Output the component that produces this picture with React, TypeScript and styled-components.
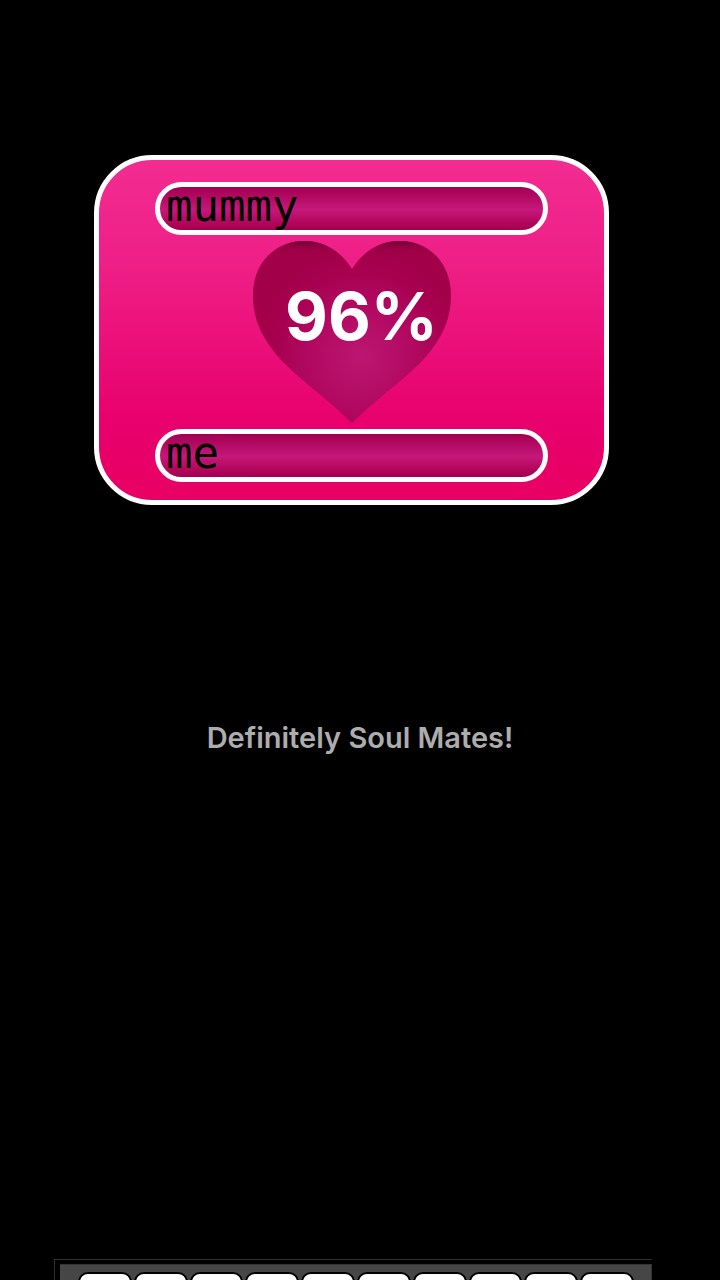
import React, { useState } from "react";
import styled, { createGlobalStyle } from "styled-components";

const GlobalStyle = createGlobalStyle`
  * { box-sizing: border-box; }
  body { margin: 0; background: #000; }
`;

const Page = styled.main`
  display: flex;
  flex-direction: column;
  min-height: 100vh;
  padding-top: 155px;
  background: #000;
  font-family: Inter, "Liberation Sans", sans-serif;
`;

const Card = styled.form`
  display: flex;
  flex-direction: column;
  align-items: center;
  margin: 0 111px 0 94px;
  padding: 22px 56px 18px;
  border: 5px solid #fff;
  border-radius: 58px;
  background: linear-gradient(#f22c92 0%, #ee1f86 30%, #e8006c 78%, #e80064 100%);
`;

const NameField = styled.input`
  display: block;
  width: 100%;
  height: 53px;
  padding: 0 0 6px 6px;
  border: 5px solid #fff;
  border-radius: 27px;
  outline: none;
  background: linear-gradient(#a3004f 0%, #b00860 20%, #c5187a 52%, #b4085e 80%, #a3004f 100%);
  color: #000;
  font: 44px "DejaVu Sans Mono", monospace;
`;

const Meter = styled.div`
  position: relative;
  width: 200px;
  height: 182px;
  margin: 6px 0;
`;

const Heart = styled.svg`
  display: block;
  width: 100%;
  height: 100%;
`;

const Score = styled.output`
  position: absolute;
  top: 33px;
  left: 20px;
  right: 0;
  text-align: center;
  color: #fff;
  font-size: 66px;
  font-weight: 700;
  line-height: 84px;
`;

const Verdict = styled.p`
  margin: 215px 0 0;
  text-align: center;
  color: #adadad;
  font-size: 29px;
  font-weight: 600;
  line-height: 36px;
`;

const Keyboard = styled.div`
  height: 21px;
  margin: auto 68px 0 54px;
  padding: 4px 0 0 5px;
  overflow: hidden;
  border-top: 1px solid #303030;
  border-left: 1px solid #303030;
`;

const KeyRow = styled.div`
  display: flex;
  gap: 2px;
  padding: 7px 17px 0 18px;
  border-top: 1px solid #333;
  border-right: 1px solid #333;
  background: #464646;
`;

const Key = styled.button`
  flex: 1;
  height: 60px;
  padding: 0;
  border: 2px solid #000;
  border-radius: 10px;
  background: #fff;
`;

const LETTERS = "QWERTYUIOP".split("");

export default function App() {
  const [first, setFirst] = useState("mummy");
  const [second, setSecond] = useState("me");

  return (
    <>
      <GlobalStyle />
      <Page>
        <Card>
          <NameField
            aria-label="First name"
            value={first}
            onChange={(e) => setFirst(e.target.value)}
          />
          <Meter>
            <Heart viewBox="0 0 200 182" aria-hidden="true">
              <defs>
                <radialGradient id="glow" gradientUnits="userSpaceOnUse" cx="110" cy="116" r="108">
                  <stop offset="0" stopColor="#bc1672" />
                  <stop offset="0.45" stopColor="#b20a62" />
                  <stop offset="0.8" stopColor="#a80050" />
                  <stop offset="1" stopColor="#a20048" />
                </radialGradient>
                <linearGradient id="shade" x1="0" y1="0" x2="0" y2="1">
                  <stop offset="0" stopColor="#600038" stopOpacity="0.9" />
                  <stop offset="0.035" stopColor="#800038" stopOpacity="0.3" />
                  <stop offset="0.08" stopColor="#900040" stopOpacity="0" />
                </linearGradient>
                <path
                  id="heart"
                  d="M100 28C90 12 74 0 52 0C23 0 1 22 1 54C1 76 8 92 20 108C30 122 45 134 60 147C76 160 90 172 100 182C110 172 124 160 140 147C155 134 170 122 180 108C192 92 199 76 199 54C199 22 177 0 148 0C126 0 110 12 100 28Z"
                />
              </defs>
              <use href="#heart" fill="url(#glow)" />
              <use href="#heart" fill="url(#shade)" />
            </Heart>
            <Score>96%</Score>
          </Meter>
          <NameField
            aria-label="Second name"
            value={second}
            onChange={(e) => setSecond(e.target.value)}
          />
        </Card>
        <Verdict>Definitely Soul Mates!</Verdict>
        <Keyboard>
          <KeyRow>
            {LETTERS.map((letter) => (
              <Key key={letter} type="button" aria-label={letter} />
            ))}
          </KeyRow>
        </Keyboard>
      </Page>
    </>
  );
}
